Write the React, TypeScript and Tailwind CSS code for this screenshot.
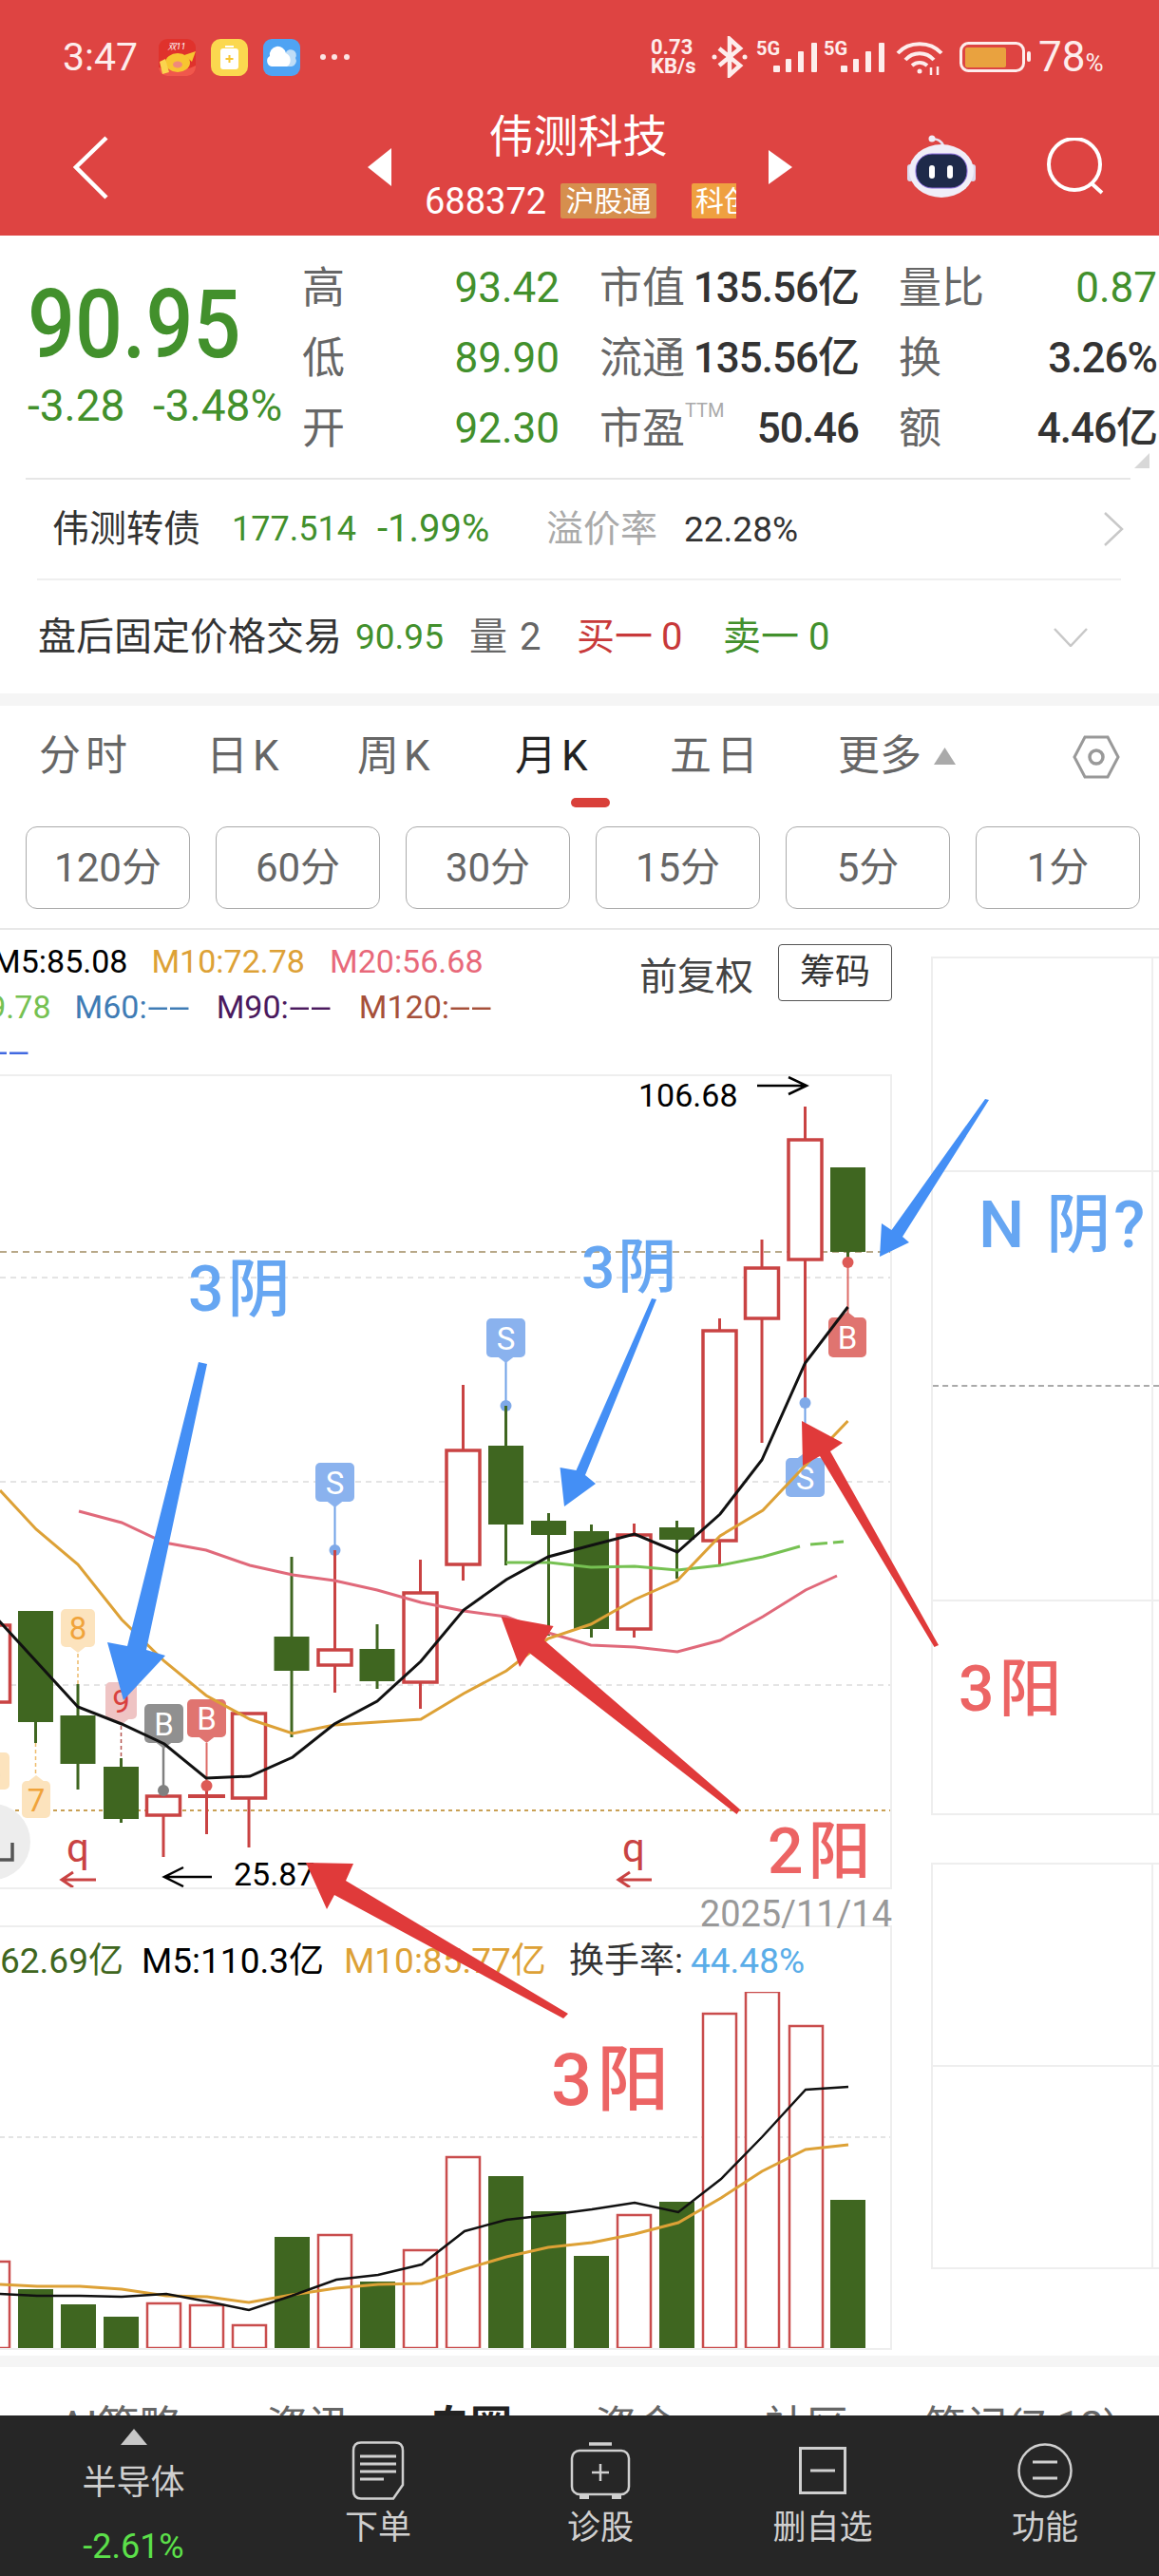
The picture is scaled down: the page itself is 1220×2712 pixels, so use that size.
const UP = '#C94343';
const DOWN = '#3F6620';

type Candle = { x: number; top: number; bot: number; wt: number; wb: number; up: boolean };

const candles: Candle[] = [
  { x: -7, top: 1709, bot: 1790, wt: 1709, wb: 1790, up: true },
  { x: 37.5, top: 1694, bot: 1811, wt: 1694, wb: 1833, up: false },
  { x: 82, top: 1804, bot: 1855, wt: 1771, wb: 1882, up: false },
  { x: 127.5, top: 1858, bot: 1913, wt: 1849, wb: 1917, up: false },
  { x: 172, top: 1889, bot: 1909, wt: 1883, wb: 1953, up: true },
  { x: 262, top: 1802, bot: 1891, wt: 1802, wb: 1943, up: true },
  { x: 307, top: 1721, bot: 1757, wt: 1637, wb: 1827, up: false },
  { x: 352.5, top: 1735, bot: 1751, wt: 1630, wb: 1780, up: true },
  { x: 397, top: 1734, bot: 1768, wt: 1708, wb: 1776, up: false },
  { x: 442.5, top: 1675, bot: 1769, wt: 1640, wb: 1797, up: true },
  { x: 487.5, top: 1525, bot: 1645, wt: 1456, wb: 1662, up: true },
  { x: 532.5, top: 1520, bot: 1603, wt: 1478, wb: 1646, up: false },
  { x: 577.5, top: 1599, bot: 1614, wt: 1591, wb: 1720, up: false },
  { x: 622.5, top: 1610, bot: 1713, wt: 1603, wb: 1722, up: false },
  { x: 667.5, top: 1614, bot: 1713, wt: 1602, wb: 1722, up: true },
  { x: 712.5, top: 1606, bot: 1619, wt: 1599, wb: 1660, up: false },
  { x: 757.5, top: 1399, bot: 1620, wt: 1386, wb: 1647, up: true },
  { x: 802, top: 1333, bot: 1386, wt: 1303, wb: 1517, up: true },
  { x: 847.5, top: 1198, bot: 1324, wt: 1163, wb: 1475, up: true },
  { x: 892.5, top: 1227, bot: 1316, wt: 1227, wb: 1327, up: false },
];

const ma5 = '-5,1700 82,1795 128,1813 173,1834 217,1870 263,1868 308,1848 352,1813 397,1789 443,1747 488,1693 533,1661 577,1637 622,1625 668,1613 713,1632 758,1592 802,1535 847.5,1433 892.5,1374';
const ma10 = '0,1567 38,1608 82,1645 128,1703 173,1747 217,1783 263,1808 308,1823 352,1814 443,1808 488,1781 533,1757 577,1723 622,1708 668,1682 713,1662 758,1615 803,1588 847.5,1541 892.5,1494';
const ma20 = '83,1589 128,1601 173,1622 217,1630 263,1646 308,1656 352,1662 397,1672 443,1685 488,1694 533,1700 577,1717 622,1730 668,1732 713,1737 758,1725 803,1700 848,1672 881,1657';
const ma30 = '533,1643 578,1643 622,1648 668,1647 713,1651 758,1646 803,1637 842,1626';

const bars: [number, number, boolean][] = [
  [-26, 2381, true], [19, 2410, false], [64, 2426, false], [109, 2439, false], [154, 2425, true],
  [199, 2427, true], [244, 2448, true], [289, 2355, false], [334, 2353, true], [379, 2402, false],
  [424, 2369, true], [469, 2271, true], [514, 2291, false], [559, 2328, false], [604, 2375, false],
  [649, 2332, true], [694, 2318, false], [739, 2120, true], [784, 2097, true], [830, 2133, true],
  [874, 2316, false],
];
const volMa5 = '0,2415 39,2417 84,2417 128,2418 175,2415 218,2423 262,2432 307,2417 354,2400 398,2395 444,2384 489,2349 533,2337 577,2332 623,2326 668,2319 714,2329 759,2294 802,2250 848,2200 893,2197';
const volMa10 = '0,2405 39,2407 84,2407 128,2410 175,2417 218,2418 262,2424 307,2416 354,2409 398,2405 444,2404 489,2389 533,2376 577,2366 623,2361 668,2352 714,2340 759,2314 802,2286 848,2263 893,2258';

function Flag({ cx, top, bot, w, fill, label, color, tipUp }: { cx: number; top: number; bot: number; w: number; fill: string; label: string; color: string; tipUp?: boolean }) {
  const tip = tipUp ? `${cx - 9},${top + 1} ${cx},${top - 6} ${cx + 9},${top + 1}` : `${cx - 9},${bot - 1} ${cx},${bot + 6} ${cx + 9},${bot - 1}`;
  return (
    <g>
      <polygon points={tip} fill={fill} />
      <rect x={cx - w / 2} y={top} width={w} height={bot - top} rx={5} fill={fill} />
      <text x={cx} y={(top + bot) / 2 + 12} textAnchor="middle" fontSize={33} fill={color}>{label}</text>
    </g>
  );
}

function CandleChart() {
  return (
    <svg width={937} height={854} viewBox="0 1131 937 854" className="block">
      <line x1={0} x2={937} y1={1343} y2={1343} stroke="#dcdcdc" strokeWidth={1.5} strokeDasharray="6 5" />
      <line x1={0} x2={937} y1={1558} y2={1558} stroke="#dcdcdc" strokeWidth={1.5} strokeDasharray="6 5" />
      <line x1={0} x2={937} y1={1772} y2={1772} stroke="#dcdcdc" strokeWidth={1.5} strokeDasharray="6 5" />
      <line x1={0} x2={937} y1={1316} y2={1316} stroke="#B8A888" strokeWidth={2} strokeDasharray="7 5" />
      <line x1={0} x2={937} y1={1904} y2={1904} stroke="#C9A055" strokeWidth={2} strokeDasharray="4 4" />

      <line x1={532.5} x2={532.5} y1={1432} y2={1478} stroke="#6FA0E6" strokeWidth={2} />
      <circle cx={532.5} cy={1478} r={6} fill="#7FA9E8" />
      <line x1={352.5} x2={352.5} y1={1584} y2={1630} stroke="#6FA0E6" strokeWidth={2} />
      <circle cx={352.5} cy={1630} r={6} fill="#7FA9E8" />
      <line x1={847.5} x2={847.5} y1={1475} y2={1533} stroke="#6FA0E6" strokeWidth={2} />
      <line x1={892.5} x2={892.5} y1={1327} y2={1385} stroke="#DD6A66" strokeWidth={2} />
      <line x1={217.5} x2={217.5} y1={1833} y2={1878} stroke="#DD6A66" strokeWidth={2} />
      <line x1={172} x2={172} y1={1833} y2={1883} stroke="#808080" strokeWidth={2.5} />
      <line x1={82} x2={82} y1={1732} y2={1771} stroke="#EDBB6B" strokeWidth={1.5} strokeDasharray="4 3" />
      <line x1={37.5} x2={37.5} y1={1833} y2={1868} stroke="#EDBB6B" strokeWidth={1.5} strokeDasharray="4 3" />
      <line x1={127.5} x2={127.5} y1={1808} y2={1849} stroke="#B5544F" strokeWidth={1.5} strokeDasharray="4 3" />

      {candles.map((c) => (
        <g key={c.x}>
          <line x1={c.x} x2={c.x} y1={c.wt} y2={c.wb} stroke={c.up ? UP : DOWN} strokeWidth={3} />
          {c.up ? (
            <rect x={c.x - 17.5} y={c.top} width={35} height={c.bot - c.top} fill="#fff" stroke={UP} strokeWidth={3.5} />
          ) : (
            <rect x={c.x - 18.5} y={c.top} width={37} height={c.bot - c.top} fill={DOWN} />
          )}
        </g>
      ))}
      <line x1={217.5} x2={217.5} y1={1878} y2={1929} stroke={UP} strokeWidth={3} />
      <rect x={198} y={1887} width={39} height={4} fill={UP} />
      <circle cx={172} cy={1883} r={6} fill="#808080" />
      <circle cx={217.5} cy={1878} r={6} fill="#DD5A56" />
      <circle cx={847.5} cy={1475} r={6} fill="#7FA9E8" />
      <circle cx={892.5} cy={1327} r={6} fill="#DD5A56" />

      <Flag cx={-8} top={1843} bot={1882} w={36} fill="#FCE3BD" label="6" color="#F0A33B" />
      <Flag cx={38} top={1873} bot={1912} w={30} fill="#FCE3BD" label="7" color="#F0A33B" tipUp />
      <Flag cx={82} top={1692} bot={1732} w={36} fill="#FCE3BD" label="8" color="#F0A33B" />
      <Flag cx={127.5} top={1769} bot={1808} w={33} fill="#EFC4C4" label="9" color="#D9413E" />
      <Flag cx={172.5} top={1792} bot={1833} w={41} fill="#909090" label="B" color="#fff" />
      <Flag cx={217.5} top={1787} bot={1827} w={41} fill="#E07470" label="B" color="#fff" />
      <Flag cx={352.5} top={1538} bot={1579} w={41} fill="#8AB2EE" label="S" color="#fff" />
      <Flag cx={532.5} top={1386} bot={1427} w={41} fill="#8AB2EE" label="S" color="#fff" />
      <Flag cx={847.5} top={1533} bot={1574} w={41} fill="#8AB2EE" label="S" color="#fff" tipUp />
      <Flag cx={892} top={1385} bot={1427} w={40} fill="#E07470" label="B" color="#fff" tipUp />

      <polyline points={ma30} fill="none" stroke="#76C152" strokeWidth={3} />
      <polyline points="853,1624 888,1621" fill="none" stroke="#76C152" strokeWidth={3} strokeDasharray="18 6" />
      <polyline points={ma20} fill="none" stroke="#E0697A" strokeWidth={3} />
      <polyline points={ma10} fill="none" stroke="#DDA136" strokeWidth={3} />
      <polyline points={ma5} fill="none" stroke="#111" strokeWidth={3} />

      <text x={672} y={1163} fontSize={34} fill="#000">106.68</text>
      <path d="M797 1141H848M830 1132L849 1141L830 1150" fill="none" stroke="#000" strokeWidth={2.5} />
      <text x={246} y={1983} fontSize={34} fill="#000">25.87</text>
      <path d="M223 1974H174M193 1964L173 1974L193 1984" fill="none" stroke="#000" strokeWidth={2.5} />
      <text x={82} y={1958} textAnchor="middle" fontSize={42} fill={UP}>q</text>
      <path d="M101 1977H65M77 1969L65 1977L77 1985" fill="none" stroke={UP} strokeWidth={3} />
      <text x={667} y={1958} textAnchor="middle" fontSize={42} fill={UP}>q</text>
      <path d="M686 1977H651M663 1969L651 1977L663 1985" fill="none" stroke={UP} strokeWidth={3} />

      <circle cx={-8} cy={1937} r={40} fill="#EDEDED" />
      <path d="M13 1938V1956H0" fill="none" stroke="#555" strokeWidth={3.5} />
    </svg>
  );
}

function VolumeChart() {
  return (
    <svg width={937} height={375} viewBox="0 2097 937 375" className="block">
      <line x1={0} x2={937} y1={2250} y2={2250} stroke="#dcdcdc" strokeWidth={1.5} strokeDasharray="5 4" />
      {bars.map(([x, top, up]) =>
        up ? (
          <rect key={x} x={x + 1} y={top} width={35} height={2472 - top} fill="#fff" stroke="#C94D4D" strokeWidth={2.5} />
        ) : (
          <rect key={x} x={x} y={top} width={37} height={2473 - top} fill={DOWN} />
        ),
      )}
      <polyline points={volMa10} fill="none" stroke="#DDA136" strokeWidth={3} />
      <polyline points={volMa5} fill="none" stroke="#111" strokeWidth={2.5} />
    </svg>
  );
}

function Arrows() {
  return (
    <svg width={1220} height={2712} viewBox="0 0 1220 2712" className="absolute left-0 top-0 pointer-events-none">
      <polygon fill="#448FF5" points="209,1434 218,1436 154,1737 174,1743 130,1790 113,1729 134,1733" />
      <polygon fill="#448FF5" points="686,1367 691,1368 616,1553 627,1562 594,1586 589.5,1545 606.5,1548" />
      <polygon fill="#448FF5" points="1037,1157 1041,1158 950,1302 957,1308 926,1323 928,1288 938.5,1295" />
      <polygon fill="#E03A3A" points="322,1961 372,1962 364,1980 598,2120 593,2125 352,1995 344,2010" />
      <polygon fill="#E03A3A" points="527.5,1702 582.6,1712 573,1727 779,1905 775.5,1910 557,1740 547,1755" />
      <polygon fill="#E03A3A" points="844,1496 887,1519 874,1528 988,1732 983.5,1734 863,1533 845,1543" />
    </svg>
  );
}

function Note({ text, className }: { text: string; className: string }) {
  return <span className={`absolute whitespace-pre leading-none font-medium ${className}`}>{text}</span>;
}

function StatusBar() {
  return (
    <div className="h-[120px] flex items-center pl-[66px] text-[#FDEDEC]">
      <span className="text-[41px] w-[80px] leading-none">3:47</span>
      <svg width={39} height={39} viewBox="0 0 39 39" className="ml-[21px]">
        <rect width={39} height={39} rx={9} fill="#E0322C" />
        <path d="M0 30C10 34 28 34 39 28V30A9 9 0 0 1 30 39H9A9 9 0 0 1 0 30Z" fill="#F0574C" />
        <ellipse cx={20} cy={25} rx={13} ry={10} fill="#F7C531" />
        <path d="M27 17L39 13L35 24Z" fill="#F7C531" />
        <path d="M1 24L7 21L11 35L4 37Z" fill="#FBD44E" />
        <ellipse cx={20} cy={27} rx={5} ry={3.5} fill="#F08A7A" />
        <text x={19} y={11} textAnchor="middle" fontSize={9} fill="#fff" fontStyle="italic">双11</text>
      </svg>
      <svg width={39} height={39} viewBox="0 0 39 39" className="ml-[16px]">
        <rect width={39} height={39} rx={10} fill="#FBD84F" />
        <rect x={10} y={10} width={19} height={22} rx={3} fill="#fff" />
        <rect x={15} y={7} width={9} height={2} fill="#fff" />
        <path d="M19.5 17V25M15.5 21H23.5" stroke="#F7C531" strokeWidth={2} />
      </svg>
      <svg width={39} height={39} viewBox="0 0 39 39" className="ml-[16px]">
        <rect width={39} height={39} rx={9} fill="#4FA3F3" />
        <path d="M24 14A5.500 5.500 0 0 1 34 20A6 6 0 0 1 30 29H20Z" fill="#BFDDF7" />
        <path d="M9 29A6 6 0 0 1 7 18A8.500 8.500 0 0 1 24 15A8 8 0 0 1 25 29Z" fill="#fff" />
      </svg>
      <svg width={32} height={8} viewBox="0 0 32 8" className="ml-[20px]">
        <circle cx={4} cy={4} r={3} fill="#FCE4E3" />
        <circle cx={16} cy={4} r={3} fill="#FCE4E3" />
        <circle cx={29} cy={4} r={3} fill="#FCE4E3" />
      </svg>
      <div className="ml-[317px] w-[52px] flex flex-col font-bold text-[22px] leading-[20px] items-start">
        <span>0.73</span>
        <span>KB/s</span>
      </div>
      <svg width={40} height={44} viewBox="0 0 40 44" className="ml-[11px]" fill="none" stroke="#FDEDEC" strokeWidth={4.5}>
        <path d="M9 13L31 31L20 41V3L31 13L9 31" />
        <circle cx={4} cy={22} r={2.5} fill="#FDEDEC" stroke="none" />
        <circle cx={36} cy={22} r={2.5} fill="#FDEDEC" stroke="none" />
      </svg>
      <SignalGroup />
      <SignalGroup />
      <svg width={50} height={37} viewBox="0 0 50 37" className="ml-[13px]" fill="none" stroke="#FDEDEC" strokeWidth={4}>
        <path d="M2 14C14 1 36 1 48 14" />
        <path d="M10 21C18 12 32 12 40 21" />
        <path d="M17 27C22 23 28 23 33 27" />
        <circle cx={25} cy={33} r={2.500} fill="#FDEDEC" stroke="none" />
        <path d="M37 37V29M44 37V28" strokeWidth={2.500} />
      </svg>
      <svg width={76} height={32} viewBox="0 0 76 32" className="ml-[17px]">
        <rect x={1.500} y={1.500} width={66} height={29} rx={8} fill="none" stroke="#FDEDEC" strokeWidth={3} />
        <rect x={6} y={6} width={43} height={21} rx={2} fill="#E9A23F" />
        <rect x={71} y={10} width={4} height={11} rx={2} fill="#FDEDEC" />
      </svg>
      <span className="ml-[7px] text-[44px] leading-none">78<span className="text-[26px]">%</span></span>
    </div>
  );
}

function SignalGroup() {
  return (
    <div className="flex items-start ml-[8px] h-[32px] w-[63px] relative">
      <span className="text-[20px] font-bold leading-[18px] mt-[-2px]">5G</span>
      <svg width={48} height={31} viewBox="0 0 48 31" className="absolute left-[18px] top-[1px]" fill="#FDEDEC">
        <rect x={0} y={24} width={7} height={7} rx={1} />
        <rect x={13} y={17} width={6} height={14} rx={1} />
        <rect x={26} y={9} width={6} height={22} rx={1} />
        <rect x={40} y={0} width={6} height={31} rx={1} />
      </svg>
    </div>
  );
}

function NavBar() {
  return (
    <div className="h-[112px] flex items-center text-white">
      <svg width={37} height={67} viewBox="0 0 37 67" className="ml-[77px]" fill="none" stroke="#fff" strokeWidth={4.500}>
        <path d="M35 2L3 33L35 65" />
      </svg>
      <svg width={25} height={40} viewBox="0 0 25 40" className="ml-[273px]">
        <polygon points="25,0 25,40 0,20" fill="#fff" />
      </svg>
      <div className="w-[397px] flex flex-col">
        <div className="text-[47px] leading-[43px] text-center pr-[4px]">伟测科技</div>
        <div className="flex items-center mt-[28px] pl-[35px] h-[37px]">
          <span className="text-[38px] w-[143px] leading-none">688372</span>
          <span className="w-[101px] h-[37px] rounded-[2px] bg-[#D68F4E] text-[30px] leading-[37px] text-center">沪股通</span>
          <div className="ml-[37px] w-[47px] h-[37px] overflow-hidden rounded-l-[2px] bg-[#EFA040] text-[30px] leading-[37px] whitespace-nowrap pl-[4px]">科创板</div>
        </div>
      </div>
      <svg width={25} height={36} viewBox="0 0 25 36">
        <polygon points="0,0 0,36 25,18" fill="#fff" />
      </svg>
      <svg width={72} height={68} viewBox="954 139 72 68" className="ml-[121px]">
        <path d="M980 144C985 142 991 146 992 151" fill="none" stroke="#E6E3F2" strokeWidth={2.500} />
        <circle cx={980} cy={143} r={3.500} fill="#F0EEF8" />
        <rect x={954} y={170} width={6} height={18} rx={3} fill="#DCD9EC" />
        <rect x={1020} y={170} width={6} height={18} rx={3} fill="#DCD9EC" />
        <ellipse cx={990} cy={177} rx={34} ry={28} fill="#F0EEF8" />
        <rect x={963} y={159} width={54} height={36} rx={17} fill="#1E2A4A" stroke="#8B6BE0" strokeWidth={1} />
        <rect x={977} y={171} width={6} height={14} rx={3} fill="#fff" />
        <rect x={996} y={171} width={6} height={14} rx={3} fill="#fff" />
      </svg>
      <svg width={62} height={62} viewBox="1100 145 62 62" className="ml-[75px]" fill="none" stroke="#fff" strokeWidth={4}>
        <circle cx={1129} cy={173} r={27} />
        <path d="M1148 194L1158 203" />
      </svg>
    </div>
  );
}

function Cell({ label, value, valueClass, note }: { label: string; value: string; valueClass: string; note?: string }) {
  return (
    <div className="flex items-center justify-between h-[74px] text-[44px] leading-none whitespace-nowrap">
      <span className="text-[#666] text-[45px]">
        {label}
        {note && <sup className="text-[20px] text-[#aaa] align-[18px] leading-none">{note}</sup>}
      </span>
      <span className={valueClass}>{value}</span>
    </div>
  );
}

function Quote() {
  const green = 'text-[#42902C]';
  const dark = 'text-[#333] tracking-[-1px] font-medium';
  return (
    <div className="h-[482px] bg-white relative">
      <div className="flex h-[255px] pt-[18px]">
        <div className="w-[318px] pl-[29px] shrink-0">
          <div className={`text-[100px] leading-none font-medium mt-[26px] origin-left scale-x-[0.88] ${green}`}>90.95</div>
          <div className={`flex text-[46px] leading-none mt-[12px] ${green}`}>
            <span className="w-[132px]">-3.28</span>
            <span>-3.48%</span>
          </div>
        </div>
        <div className="w-[271px]">
          <Cell label="高" value="93.42" valueClass={green} />
          <Cell label="低" value="89.90" valueClass={green} />
          <Cell label="开" value="92.30" valueClass={green} />
        </div>
        <div className="w-[273px] ml-[42px]">
          <Cell label="市值" value="135.56亿" valueClass={dark} />
          <Cell label="流通" value="135.56亿" valueClass={dark} />
          <Cell label="市盈" note="TTM" value="50.46" valueClass={dark} />
        </div>
        <div className="w-[272px] ml-[42px]">
          <Cell label="量比" value="0.87" valueClass={green} />
          <Cell label="换" value="3.26%" valueClass={dark} />
          <Cell label="额" value="4.46亿" valueClass={dark} />
        </div>
      </div>
      <svg width={16} height={16} viewBox="0 0 16 16" className="absolute left-[1194px] top-[229px]">
        <polygon points="16,0 16,16 0,16" fill="#d8d8d8" />
      </svg>
      <div className="mx-[27px] w-[1163px] border-t-2 border-[#e6e6e6]" />
      <div className="h-[104px] flex items-center pl-[55px] text-[37px] whitespace-nowrap leading-none">
        <span className="text-[39px] text-[#333] w-[189px]">伟测转债</span>
        <span className={`text-[36px] w-[153px] ${green}`}>177.514</span>
        <span className={`text-[40px] w-[178px] ${green}`}>-1.99%</span>
        <span className="text-[39px] text-[#aaa] w-[145px]">溢价率</span>
        <span className="text-[#333]">22.28%</span>
        <svg width={22} height={36} viewBox="0 0 22 36" className="ml-[321px]" fill="none" stroke="#c8c8c8" strokeWidth={2.500}>
          <path d="M2 1L20 18L2 35" />
        </svg>
      </div>
      <div className="mx-[39px] w-[1141px] border-t-2 border-[#efefef]" />
      <div className="h-[119px] flex items-center pl-[40px] text-[40px] whitespace-nowrap leading-none">
        <span className="text-[#333] w-[334px]">盘后固定价格交易</span>
        <span className={`text-[37px] w-[120px] ${green}`}>90.95</span>
        <span className="text-[#666] w-[53px]">量</span>
        <span className="text-[#666] w-[60px]">2</span>
        <span className="text-[#C8393A] w-[89px]">买一</span>
        <span className="text-[#C8393A] w-[65px]">0</span>
        <span className={`w-[90px] ${green}`}>卖一</span>
        <span className={`w-[258px] ${green}`}>0</span>
        <svg width={36} height={20} viewBox="0 0 36 20" fill="none" stroke="#c8c8c8" strokeWidth={2.500}>
          <path d="M1 1L18 19L35 1" />
        </svg>
      </div>
    </div>
  );
}

function Tabs() {
  const tabs = [
    { label: '分时', w: 176 },
    { label: '日K', w: 159 },
    { label: '周K', w: 166 },
    { label: '月K', w: 163 },
    { label: '五日', w: 177 },
  ];
  return (
    <div>
      <div className="h-[97px] flex items-start pt-[31px] pl-[41px] text-[44px] leading-[44px] text-[#666]">
        {tabs.map((t) => (
          <span key={t.label} className={`tracking-[5px] ${t.label === '月K' ? 'text-[#222]' : ''}`} style={{ width: t.w }}>
            {t.label}
          </span>
        ))}
        <span className="w-[101px] whitespace-nowrap">更多</span>
        <svg width={23} height={18} viewBox="0 0 23 18" className="mt-[13px]">
          <polygon points="11.500,0 23,18 0,18" fill="#aaa" />
        </svg>
        <svg width={50} height={46} viewBox="0 0 50 46" className="ml-[123px]" fill="none" stroke="#999" strokeWidth={3}>
          <path d="M13 2H37L48 23L37 44H13L2 23Z" />
          <circle cx={25} cy={23} r={7} strokeWidth={3.500} />
        </svg>
      </div>
      <div className="ml-[601px] w-[41px] h-[10px] rounded-full bg-[#D9403A]" />
      <div className="flex gap-[27px] pl-[27px] pt-[20px] pb-[20px]">
        {['120分', '60分', '30分', '15分', '5分', '1分'].map((t) => (
          <div key={t} className="w-[173px] h-[87px] rounded-[12px] border border-[#aaa] flex items-center justify-center text-[42px] text-[#666]">
            {t}
          </div>
        ))}
      </div>
    </div>
  );
}

// the app's font draws "--" much wider than Roboto does
function Dash({ w }: { w: string }) {
  return <span className={`inline-block origin-left scale-x-[2.4] ${w}`}>--</span>;
}

function Legend() {
  return (
    <div className="h-[152px] flex">
      <div className="w-[660px] overflow-hidden text-[34px] leading-none whitespace-nowrap pt-[16px]">
        <div className="flex ml-[-8px]">
          <span className="text-black">M5:85.08</span>
          <span className="text-[#DDA136] ml-[25px]">M10:72.78</span>
          <span className="text-[#E8697A] ml-[26px]">M20:56.68</span>
        </div>
        <div className="flex ml-[-108px] mt-[14px]">
          <span className="text-[#76C152]">M30:49.78</span>
          <span className="text-[#3F7CB5] ml-[25px]">M60:<Dash w="w-[45px]" /></span>
          <span className="text-[#4B1A5E] ml-[28px]">M90:<Dash w="w-[45px]" /></span>
          <span className="text-[#A6503A] ml-[29px]">M120:<Dash w="w-[45px]" /></span>
        </div>
        <div className="text-[#4169E1] mt-[13px] ml-[-14px]"><Dash w="w-[45px]" /></div>
      </div>
      <span className="ml-[13px] mt-[30px] text-[40px] leading-[40px] text-[#444] whitespace-nowrap w-[146px]">前复权</span>
      <div className="mt-[15px] w-[120px] h-[60px] rounded-[4px] border border-[#555] text-[37px] leading-[58px] text-center text-[#333]">筹码</div>
    </div>
  );
}

function SidePanel() {
  const rows = [
    { h: 'h-[225px]', line: 'border-b-2 border-[#eee]' },
    { h: 'h-[226px]', line: 'border-b-2 border-dashed border-[#aaa]' },
    { h: 'h-[226px]', line: 'border-b-2 border-[#eee]' },
    { h: 'h-[225px]', line: 'border-b-2 border-[#eee]' },
  ];
  return (
    <div className="flex-1 pt-[28px] ml-[41px]">
      <div className="border-l-2 border-t-2 border-[#eee]">
        {rows.map((r) => (
          <div key={r.h + r.line} className={`${r.h} ${r.line}`}>
            <div className="h-full w-[232px] border-r-2 border-[#eee]" />
          </div>
        ))}
      </div>
      <div className="mt-[50px] border-l-2 border-t-2 border-[#eee]">
        <div className="h-[213px] border-b-2 border-[#eee]">
          <div className="h-full w-[232px] border-r-2 border-[#eee]" />
        </div>
        <div className="h-[213px] border-b-2 border-[#eee]">
          <div className="h-full w-[232px] border-r-2 border-[#eee]" />
        </div>
      </div>
    </div>
  );
}

function ChartSection() {
  return (
    <div className="h-[1503px] border-t-2 border-[#e8e8e8] flex overflow-hidden">
      <div className="w-[939px] shrink-0">
        <Legend />
        <div className="border-y-2 border-r-2 border-[#eee]">
          <CandleChart />
        </div>
        <div className="h-[38px] pt-[12px] text-right text-[38px] leading-[28px] text-[#999]">2025/11/14</div>
        <div className="border-y-2 border-r-2 border-[#eee]">
          <div className="h-[68px] pt-[19px] flex text-[37px] leading-[34px] whitespace-nowrap">
            <span className="text-[#3F6620] w-[149px]">62.69亿</span>
            <span className="text-black w-[213px]">M5:110.3亿</span>
            <span className="text-[#DDA136] w-[237px]">M10:85.77亿</span>
            <span className="text-[#333] w-[128px]">换手率:</span>
            <span className="text-[#5AADE8]">44.48%</span>
          </div>
          <VolumeChart />
        </div>
      </div>
      <SidePanel />
    </div>
  );
}

function SubTabs() {
  const tabs = [
    { label: 'AI策略', w: 218, cls: 'text-[#666]' },
    { label: '资讯', w: 171, cls: 'text-[#666]' },
    { label: '自圈', w: 175, cls: 'text-[#222] font-bold' },
    { label: '资金', w: 179, cls: 'text-[#666]' },
    { label: '社区', w: 168, cls: 'text-[#666]' },
    { label: '笔记(7.12)', w: 200, cls: 'text-[#666]' },
  ];
  return (
    <div className="h-[51px] overflow-hidden flex pl-[62px] pt-[41px] text-[44px] leading-[44px] whitespace-nowrap">
      {tabs.map((t) => (
        <span key={t.label} className={t.cls} style={{ width: t.w }}>{t.label}</span>
      ))}
    </div>
  );
}

function BottomBar() {
  const stroke = '#cfcfcf';
  const items = [
    {
      label: '下单',
      icon: (
        <svg width={56} height={62} viewBox="0 0 56 62" fill="none" stroke={stroke} strokeWidth={2.500}>
          <path d="M10 1.500H46Q54 1.500 54 10V46L44 60.500H10Q2 60.500 2 52V10Q2 1.500 10 1.500Z" />
          <path d="M9 16H47M9 24H47M9 32H47M9 40H34" strokeWidth={3} />
        </svg>
      ),
    },
    {
      label: '诊股',
      icon: (
        <svg width={64} height={60} viewBox="0 0 64 60" fill="none" stroke={stroke} strokeWidth={2.500}>
          <path d="M20 2H44" strokeWidth={3.500} />
          <rect x={2} y={9} width={60} height={46} rx={8} />
          <path d="M32 23V41M23 32H41" />
          <path d="M10 58H20M44 58H54" strokeWidth={4} />
        </svg>
      ),
    },
    {
      label: '删自选',
      icon: (
        <svg width={50} height={50} viewBox="0 0 50 50" fill="none" stroke={stroke} strokeWidth={3}>
          <rect x={1.500} y={1.500} width={47} height={47} />
          <path d="M12 25H38" />
        </svg>
      ),
    },
    {
      label: '功能',
      icon: (
        <svg width={58} height={58} viewBox="0 0 58 58" fill="none" stroke={stroke} strokeWidth={2.500}>
          <circle cx={29} cy={29} r={27.500} />
          <path d="M16 20H42M16 37H42" strokeWidth={3} />
        </svg>
      ),
    },
  ];
  return (
    <div className="h-[169px] bg-[#262626] flex text-[#cfcfcf]">
      <div className="w-[281px] shrink-0 flex flex-col items-center pt-[14px]">
        <svg width={28} height={17} viewBox="0 0 28 17">
          <polygon points="14,0 28,17 0,17" fill="#c8c8c8" />
        </svg>
        <span className="text-[36px] leading-[33px] mt-[24px]">半导体</span>
        <span className="text-[36px] leading-[30px] mt-[35px] text-[#5CE04A]">-2.61%</span>
      </div>
      {items.map((it) => (
        <div key={it.label} className="w-[234px] shrink-0 flex flex-col items-center pt-[27px]">
          <div className="h-[62px] flex items-center">{it.icon}</div>
          <span className="text-[35px] leading-[34px] mt-[13px]">{it.label}</span>
        </div>
      ))}
    </div>
  );
}

export default function App() {
  return (
    <div className="relative w-[1220px] h-[2712px] overflow-hidden bg-white font-[family-name:Roboto,'Noto_Sans_CJK_SC',sans-serif]">
      <div className="h-[248px] bg-[#DE4442]">
        <StatusBar />
        <NavBar />
      </div>
      <Quote />
      <div className="h-[13px] bg-[#f5f5f5]" />
      <Tabs />
      <ChartSection />
      <div className="h-[12px] bg-[#f5f5f5]" />
      <SubTabs />
      <BottomBar />

      <Arrows />
      <Note text="3阴" className="left-[198px] top-[1325px] text-[66px] tracking-[4px] text-[#66A6F2]" />
      <Note text="3阴" className="left-[612px] top-[1304px] text-[62px] tracking-[3px] text-[#66A6F2]" />
      <Note text="N 阴?" className="left-[1030px] top-[1256px] text-[68px] tracking-[3px] text-[#66A6F2]" />
      <Note text="3阳" className="left-[1009px] top-[1746px] text-[66px] tracking-[5px] text-[#EC6464]" />
      <Note text="2阳" className="left-[808px] top-[1917px] text-[66px] tracking-[5px] text-[#EC6464]" />
      <Note text="3阳" className="left-[580px] top-[2152px] text-[76px] tracking-[5px] text-[#EC6464]" />
    </div>
  );
}
